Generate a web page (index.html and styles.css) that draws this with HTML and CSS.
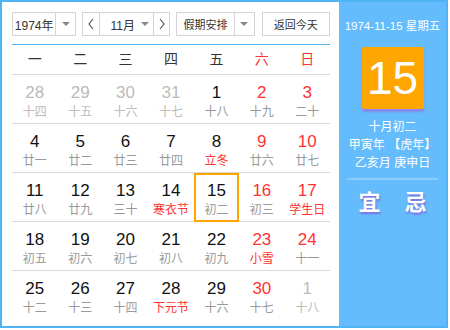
FILE: index.html
```html
<!DOCTYPE html>
<html lang="zh">
<head>
  <meta charset="UTF-8">
  <title>万年历</title>
  <link rel="stylesheet" href="styles.css">
</head>
<body>
  <div class="calendar">
    <div class="main">
      <div class="toolbar">
        <div class="box year">
          <span class="val">1974年</span>
          <span class="drop"><i class="tri"></i></span>
        </div>
        <div class="box month">
          <span class="nav"><svg width="8" height="12" viewBox="0 0 8 12"><polyline points="6,1 2,6 6,11" fill="none" stroke="#555" stroke-width="1.2"/></svg></span>
          <span class="val">11月</span>
          <span class="inl"><i class="tri"></i></span>
          <span class="nav"><svg width="8" height="12" viewBox="0 0 8 12"><polyline points="2,1 6,6 2,11" fill="none" stroke="#555" stroke-width="1.2"/></svg></span>
        </div>
        <div class="box holiday">
          <span class="val">假期安排</span>
          <span class="drop"><i class="tri"></i></span>
        </div>
        <div class="box today-btn">返回今天</div>
      </div>

      <div class="weekdays">
        <span>一</span><span>二</span><span>三</span><span>四</span><span>五</span>
        <span class="red">六</span><span class="red">日</span>
      </div>

      <div class="days">
        <div class="cell other"><b>28</b><em>十四</em></div>
        <div class="cell other"><b>29</b><em>十五</em></div>
        <div class="cell other"><b>30</b><em>十六</em></div>
        <div class="cell other"><b>31</b><em>十七</em></div>
        <div class="cell"><b>1</b><em>十八</em></div>
        <div class="cell wk"><b>2</b><em>十九</em></div>
        <div class="cell wk"><b>3</b><em>二十</em></div>

        <div class="cell"><b>4</b><em>廿一</em></div>
        <div class="cell"><b>5</b><em>廿二</em></div>
        <div class="cell"><b>6</b><em>廿三</em></div>
        <div class="cell"><b>7</b><em>廿四</em></div>
        <div class="cell"><b>8</b><em class="fest">立冬</em></div>
        <div class="cell wk"><b>9</b><em>廿六</em></div>
        <div class="cell wk"><b>10</b><em>廿七</em></div>

        <div class="cell"><b>11</b><em>廿八</em></div>
        <div class="cell"><b>12</b><em>廿九</em></div>
        <div class="cell"><b>13</b><em>三十</em></div>
        <div class="cell"><b>14</b><em class="fest">寒衣节</em></div>
        <div class="cell current"><b>15</b><em>初二</em></div>
        <div class="cell wk"><b>16</b><em>初三</em></div>
        <div class="cell wk"><b>17</b><em class="fest">学生日</em></div>

        <div class="cell"><b>18</b><em>初五</em></div>
        <div class="cell"><b>19</b><em>初六</em></div>
        <div class="cell"><b>20</b><em>初七</em></div>
        <div class="cell"><b>21</b><em>初八</em></div>
        <div class="cell"><b>22</b><em>初九</em></div>
        <div class="cell wk"><b>23</b><em class="fest">小雪</em></div>
        <div class="cell wk"><b>24</b><em>十一</em></div>

        <div class="cell last"><b>25</b><em>十二</em></div>
        <div class="cell last"><b>26</b><em>十三</em></div>
        <div class="cell last"><b>27</b><em>十四</em></div>
        <div class="cell last"><b>28</b><em class="fest">下元节</em></div>
        <div class="cell last"><b>29</b><em>十六</em></div>
        <div class="cell last wk"><b>30</b><em>十七</em></div>
        <div class="cell last other"><b>1</b><em>十八</em></div>
      </div>
    </div>

    <div class="side">
      <div class="side-date">1974-11-15 星期五</div>
      <div class="big-day">15</div>
      <div class="lunar">
        <p>十月初二</p>
        <p>甲寅年 【虎年】</p>
        <p>乙亥月 庚申日</p>
      </div>
      <div class="yiji">
        <span>宜</span><span>忌</span>
      </div>
    </div>
  </div>
</body>
</html>
```

FILE: styles.css
```css
body {
  margin: 0;
  font-family: "Liberation Sans", "Noto Sans CJK SC", sans-serif;
  color: #333;
}
.calendar {
  display: flex;
  width: 444px;
  height: 324px;
  border: 2px solid #4fb3f6;
  background: #fff;
}
.main {
  width: 318px;
  padding: 10px 9px 0 10px;
}
.toolbar {
  display: flex;
  height: 24px;
  margin-bottom: 8px;
}
.box {
  display: flex;
  align-items: center;
  height: 22px;
  border: 1px solid #d4d4d4;
  font-size: 12px;
  color: #333;
  box-sizing: content-box;
}
.box .val {
  flex: 1;
  text-align: center;
}
.drop {
  width: 19px;
  height: 22px;
  border-left: 1px solid #d4d4d4;
  display: flex;
  align-items: center;
  justify-content: center;
}
.tri {
  width: 0;
  height: 0;
  border-left: 4px solid transparent;
  border-right: 4px solid transparent;
  border-top: 4px solid #888;
}
.year {
  width: 63px;
}
.month {
  width: 86px;
  margin-left: 6px;
}
.month .nav {
  width: 18px;
  height: 22px;
  display: flex;
  align-items: center;
  justify-content: center;
}
.month .nav:first-child {
  border-right: 1px solid #d4d4d4;
}
.month .nav:last-child {
  border-left: 1px solid #d4d4d4;
}
.month .val {
  flex: none;
  padding-left: 11px;
  width: 26px;
  text-align: left;
}
.month .inl {
  width: 20px;
  display: flex;
  justify-content: center;
}
.holiday {
  width: 77px;
  margin-left: 6px;
}
.holiday .val {
  white-space: nowrap;
  font-size: 11px;
}
.today-btn {
  width: 67px;
  margin-left: 7px;
  justify-content: center;
  font-size: 11px;
}
.weekdays {
  display: grid;
  grid-template-columns: repeat(7, 1fr);
  height: 29px;
  border-top: 1px solid #4fb3f6;
  border-bottom: 1px solid #d8d8d8;
  font-size: 14px;
  line-height: 29px;
  text-align: center;
  color: #333;
}
.red {
  color: #ff3333;
}
.days {
  display: grid;
  grid-template-columns: repeat(7, 1fr);
}
.cell {
  height: 48px;
  border-bottom: 1px solid #d8d8d8;
  box-sizing: content-box;
  display: flex;
  flex-direction: column;
  align-items: center;
}
.cell.last {
  border-bottom: none;
}
.cell b {
  font-weight: normal;
  font-size: 17px;
  color: #111;
  margin-top: 8px;
  line-height: 20px;
}
.cell em {
  font-style: normal;
  font-size: 12px;
  color: #999;
  line-height: 16px;
  margin-top: 1px;
}
.cell.wk b,
.cell em.fest {
  color: #ff3333;
}
.cell.other b,
.cell.other em {
  color: #bbb;
}
.cell.current {
  outline: 2px solid #ffa500;
  outline-offset: -2px;
  border-bottom-color: transparent;
}
.side {
  width: 107px;
  background: #65bcfc;
  color: #fff;
  display: flex;
  flex-direction: column;
  align-items: center;
}
.side-date {
  font-size: 11.5px;
  margin-top: 16px;
  line-height: 16px;
  white-space: nowrap;
}
.big-day {
  width: 62px;
  height: 62px;
  margin-top: 13px;
  background: #ffa500;
  border-radius: 2px;
  box-shadow: 0 3px 2px #8a86ec;
  font-size: 46px;
  line-height: 62px;
  text-align: center;
}
.lunar {
  margin-top: 9px;
  text-align: center;
  font-size: 12px;
  width: 91px;
  border-bottom: 2px solid #8ccdfb;
  padding-bottom: 6px;
}
.lunar p {
  margin: 0;
  line-height: 18px;
}
.yiji {
  display: flex;
  gap: 24px;
  margin-top: 4px;
  font-size: 22px;
  font-weight: bold;
  text-shadow: 1px 2px 2px #7b6fe0;
}
```
